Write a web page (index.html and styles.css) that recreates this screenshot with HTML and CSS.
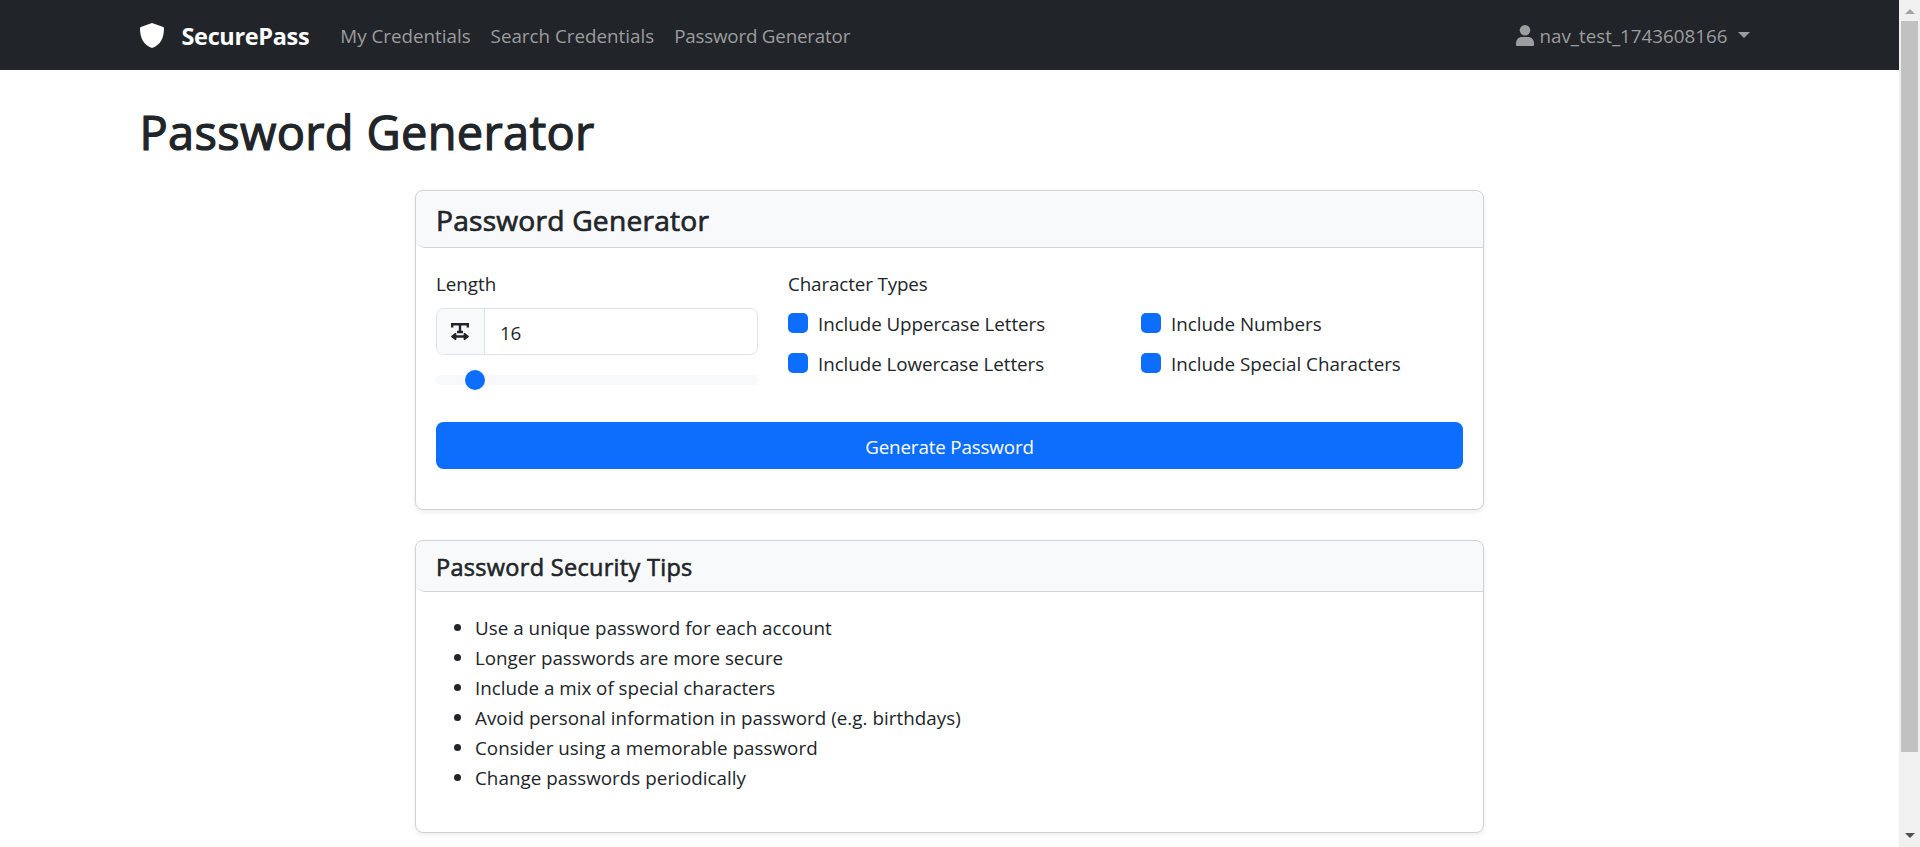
FILE: index.html
```html
<!DOCTYPE html>
<html lang="en">
<head>
<meta charset="utf-8">
<title>Password Generator - SecurePass</title>
<link rel="stylesheet" href="styles.css">
</head>
<body>
<div class="page">
  <nav class="navbar">
    <div class="container navbar-inner">
      <a class="brand"><svg class="brand-icon" viewBox="0 0 24 25"><path d="M12 0 23.2 3.9Q24 4.2 24 5C24 15 20.500 22 12 25 3.500 22 0 15 0 5Q0 4.200 .8 3.900Z"/></svg><span>SecurePass</span></a>
      <div class="links">
        <a>My Credentials</a>
        <a>Search Credentials</a>
        <a class="tight">Password Generator</a>
      </div>
      <a class="user"><svg class="user-icon" viewBox="0 0 18 21"><circle cx="9" cy="5.300" r="5.300"/><path d="M0 20V18.500C0 14.500 2.500 12 6 12H12C15.500 12 18 14.500 18 18.500V20Q18 21 17 21H1Q0 21 0 20Z"/></svg><span>nav_test_1743608166</span><span class="caret"></span></a>
    </div>
  </nav>
  <main class="container">
    <h1 class="page-title">Password Generator</h1>
    <div class="column">
      <section class="card">
        <h4 class="card-header">Password Generator</h4>
        <div class="card-body">
          <div class="form-row">
            <div class="length">
              <div class="label">Length</div>
              <div class="input-group">
                <span class="addon"><svg class="width-icon" viewBox="0 0 18 17"><path d="M1.200 4.500V1.200H16.800V4.500M9 1.200V9M6 9H12M2 13.500H16"/><path class="tips" d="M4.600 10.700 1 13.500 4.600 16.300ZM13.400 10.700 17 13.500 13.400 16.300Z"/></svg></span>
                <span class="value">16</span>
              </div>
              <div class="range"><span class="thumb"></span></div>
            </div>
            <div class="types">
              <div class="label snug">Character Types</div>
              <div class="checks">
                <label class="check"><span class="box"></span><span class="fit">Include Uppercase Letters</span></label>
                <label class="check"><span class="box"></span><span>Include Numbers</span></label>
                <label class="check"><span class="box"></span><span class="fit">Include Lowercase Letters</span></label>
                <label class="check"><span class="box"></span><span>Include Special Characters</span></label>
              </div>
            </div>
          </div>
          <button class="generate">Generate Password</button>
        </div>
      </section>
      <section class="card">
        <h5 class="card-header tips-header">Password Security Tips</h5>
        <ul class="tips-list">
          <li class="loose">Use a unique password for each account</li>
          <li>Longer passwords are more secure</li>
          <li>Include a mix of special characters</li>
          <li class="loose">Avoid personal information in password (e.g. birthdays)</li>
          <li class="loose">Consider using a memorable password</li>
          <li class="loose">Change passwords periodically</li>
        </ul>
      </section>
    </div>
  </main>
</div>
<aside class="scrollbar"><span class="arrow-up"></span><span class="scroll-thumb"></span><span class="arrow-down"></span></aside>
</body>
</html>
```
FILE: styles.css
```css
* { box-sizing: border-box; }
body {
  margin: 0;
  height: 847px;
  overflow: hidden;
  display: flex;
  background: #fff;
  color: #212529;
  font: 18.8px/30px "Open Sans", sans-serif;
}
.page { flex: 1; min-width: 0; height: 847px; overflow: hidden; }
.container { width: 1650px; margin: 0 auto; padding: 0 15px; }

.navbar { height: 70px; background: #212529; color: #9b9d9e; white-space: nowrap; }
.navbar-inner { height: 70px; display: flex; align-items: center; }
.brand { display: flex; align-items: center; gap: 18px; color: #fff; font-size: 23.5px; font-weight: 700; letter-spacing: -.35px; }
.brand span { padding-top: 2px; }
.brand-icon { width: 24px; height: 25px; fill: #fff; }
.links { display: flex; gap: 20px; margin-left: 31px; padding-top: 2px; }
.tight { letter-spacing: -.2px; }
.user { display: flex; align-items: center; margin-left: auto; margin-right: 10px; }
.user span:not(.caret) { padding-top: 2px; }
.user-icon { width: 18px; height: 21px; margin-right: 5px; fill: #9b9d9e; }
.caret { margin-left: 10px; border: 6px solid transparent; border-top-color: #9b9d9e; border-bottom: 0; }

.page-title {
  margin: 32px 0 28px;
  font-size: 47px;
  line-height: 60px;
  font-weight: 400;
  letter-spacing: .32px;
  -webkit-text-stroke: 1.2px #212529;
}
.column { width: 1069px; margin: 0 auto; display: grid; gap: 30px; }
.card {
  border: 1px solid #d0d1d2;
  border-radius: 8px;
  background: #fff;
  box-shadow: 0 2px 5px rgba(0, 0, 0, .075);
}
.card-header {
  height: 57px;
  margin: 0;
  padding: 11px 20px 9px;
  border-bottom: 1px solid #d3d4d5;
  border-radius: 9px 9px 0 9px;
  background: #f8f9fa;
  font-size: 28.2px;
  line-height: 36px;
  font-weight: 400;
  letter-spacing: .2px;
  -webkit-text-stroke: .7px #212529;
}
.card-body { height: 261px; padding: 20px; }
.form-row { display: flex; gap: 30px; height: 154px; }
.length { width: 322px; }
.types { flex: 1; }
.label { height: 30px; margin-bottom: 10px; padding-top: 1px; }
.snug { letter-spacing: -.12px; }
.input-group { display: flex; height: 47px; border: 1px solid #dee2e6; border-radius: 7.5px; overflow: hidden; }
.addon { width: 48px; display: flex; align-items: center; justify-content: center; padding-right: 1px; background: #f8f9fa; border-right: 1px solid #dee2e6; }
.width-icon { width: 18px; height: 17px; fill: none; stroke: #212529; stroke-width: 2.4; }
.tips { fill: #212529; stroke-width: 1.6; stroke-linejoin: round; }
.value { padding: 9px 15px 0; letter-spacing: -.3px; }
.range { height: 10px; margin-top: 20px; border-radius: 10px; background: #f8f9fa; display: flex; align-items: center; padding-left: 29px; }
.thumb { width: 20px; height: 20px; border-radius: 50%; background: #0d6efd; }
.checks { display: grid; grid-template-columns: 353px 1fr; row-gap: 10px; }
.check { display: flex; gap: 10px; height: 30px; padding-top: 1px; }
.fit { letter-spacing: -.06px; }
.box { width: 20px; height: 20px; margin-top: 4px; border-radius: 5px; background: #0d6efd; }
.generate { display: block; width: 100%; height: 47px; border: 0; border-radius: 7.5px; background: #0d6efd; color: #fff; font: inherit; letter-spacing: -.15px; padding: 2px 0 0; }

.tips-header { height: 51px; font-size: 23.5px; line-height: 30px; letter-spacing: .3px; -webkit-text-stroke-width: .6px; }
.tips-list { height: 240px; margin: 0; padding: 21px 20px 19px 59px; }
.tips-list li::marker { font-size: 20px; }
.loose { letter-spacing: .04px; }

.scrollbar { width: 21px; height: 847px; background: #f0f0f0; display: flex; flex-direction: column; align-items: center; padding: 9px 0; }
.scroll-thumb { width: 17px; height: 731px; margin-top: 7px; background: #c1c1c1; }
.arrow-up { border: 5px solid transparent; border-top: 0; border-bottom-color: #a3a3a3; }
.arrow-down { margin-top: auto; border: 5px solid transparent; border-bottom: 0; border-top-color: #505050; }
```
